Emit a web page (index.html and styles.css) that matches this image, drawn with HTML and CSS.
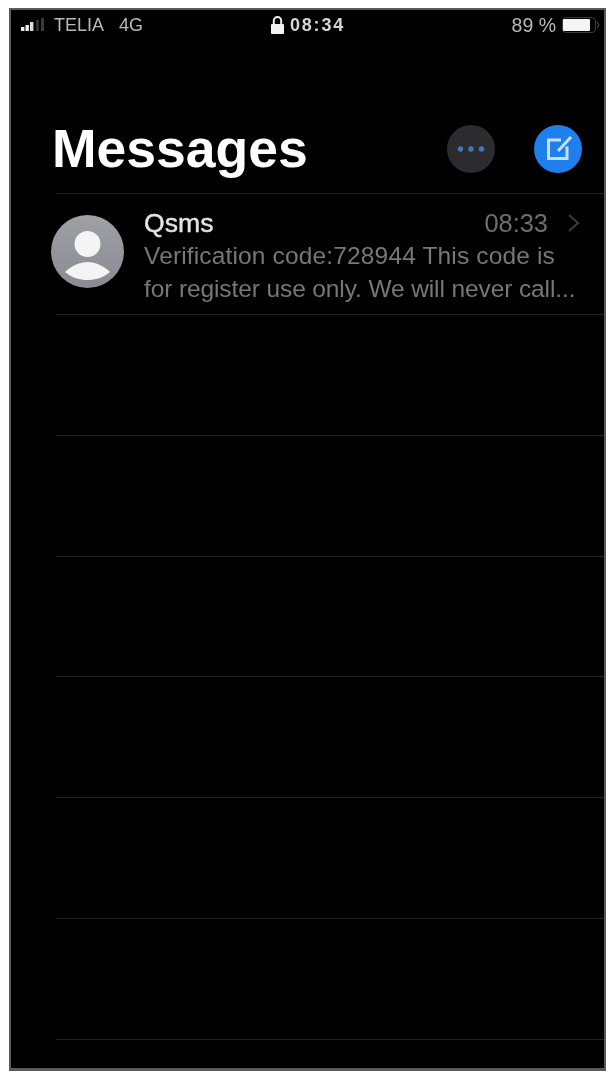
FILE: index.html
```html
<!DOCTYPE html>
<html lang="en">
<head>
<meta charset="utf-8">
<title>Messages</title>
<link rel="stylesheet" href="styles.css">
</head>
<body>
<main class="phone">
  <div class="content">
    <header class="status">
      <div class="status-left">
        <svg class="signal" width="26" height="14" viewBox="0 0 26 14"><rect x="0" y="9" width="3.4" height="4" fill="#eee"/><rect x="4.5" y="7" width="3.4" height="6" fill="#eee"/><rect x="9" y="4" width="3.4" height="9" fill="#ddd"/><rect x="15" y="2" width="3" height="11" fill="#2e2e2e"/><rect x="20" y="0" width="3" height="13" fill="#3a3a3a"/></svg>
        <span>TELIA</span><span class="net">4G</span>
      </div>
      <div class="status-mid">
        <svg width="15" height="20" viewBox="0 0 15 20"><path d="M3.8 9V5.8a3.7 3.7 0 0 1 7.4 0V9" fill="none" stroke="#eee" stroke-width="2"/><rect x="1" y="9" width="13" height="10" rx="1" fill="#f2f2f2"/></svg>
        <span>08:34</span>
      </div>
      <div class="status-right">
        <span>89 %</span>
        <svg width="38" height="18" viewBox="0 0 38 18"><rect x=".5" y="1.5" width="33" height="15" rx="3.5" fill="none" stroke="#3c3c3c"/><rect x="1" y="3" width="27" height="12" rx="1" fill="#f5f5f5"/><path d="M35 6l2 3-2 3" fill="none" stroke="#444" stroke-width="1.2"/></svg>
      </div>
    </header>
    <div class="title-row">
      <h1>Messages</h1>
      <button class="round more" type="button" aria-label="More"><svg width="32" height="8" viewBox="0 0 32 8"><circle cx="5.5" cy="4" r="2.7" fill="#3f78c0"/><circle cx="16" cy="4" r="2.7" fill="#3f78c0"/><circle cx="26.5" cy="4" r="2.7" fill="#3f78c0"/></svg></button>
      <button class="round compose" type="button" aria-label="Compose"><svg width="48" height="48" viewBox="0 0 48 48"><path d="M27 15H14.5v18.5H33V21.5" fill="none" stroke="#c4e0ff" stroke-width="3"/><path d="M24 26 37 12" fill="none" stroke="#c4e0ff" stroke-width="3"/></svg></button>
    </div>
    <ul class="list">
      <li class="row message">
        <div class="avatar"><svg width="73" height="73" viewBox="0 0 73 73"><defs><linearGradient id="g" x1="0" y1="0" x2="0" y2="1"><stop offset="0" stop-color="#a0a1a7"/><stop offset="1" stop-color="#8a8b92"/></linearGradient></defs><circle cx="36.5" cy="36.5" r="36.5" fill="url(#g)"/><circle cx="36.5" cy="29" r="13" fill="#f4f4f5"/><path d="M14 57C20 51 29 47 36.5 47S53 51 59 57C52 63 44 65 36.5 65S21 63 14 57Z" fill="#f4f4f5"/></svg></div>
        <div class="body">
          <div class="head"><span class="name">Qsms</span><span class="time">08:33</span><svg class="chev" width="13" height="20" viewBox="0 0 13 20"><path d="M2 2l9 8-9 8" fill="none" stroke="#3a3a3a" stroke-width="2"/></svg></div>
          <p class="preview"><span class="line-a">Verification code:728944 This code is</span><span class="line-b">for register use only. We will never call...</span></p>
        </div>
      </li>
      <li class="row"></li>
      <li class="row"></li>
      <li class="row"></li>
      <li class="row"></li>
      <li class="row"></li>
      <li class="row"></li>
      <li class="row"></li>
    </ul>
  </div>
</main>
</body>
</html>
```
FILE: styles.css
```css
* { box-sizing: border-box; }
html, body { margin: 0; padding: 0; background: #fff; }
body { width: 610px; height: 1071px; overflow: hidden; padding: 8px 4px 0 9px; font-family: "Liberation Sans", Arial, sans-serif; }
.phone { height: 1063px; background: #000; border: 2px solid #5a5a5a; border-bottom-width: 3px; overflow: hidden; }
.content { filter: blur(.7px); }
.status { display: flex; align-items: center; height: 30px; padding: 0 4px 0 10px; color: #b8b8b8; font-size: 18px; }
.status-left { display: flex; align-items: center; gap: 7px; width: 249px; flex: none; }
.net { margin-left: 8px; }
.status-mid { display: flex; align-items: center; gap: 5px; color: #d5d5d5; font-weight: 700; font-size: 18px; letter-spacing: 1.8px; }
.status-right { display: flex; align-items: center; gap: 6px; margin-left: auto; font-size: 19.5px; }
.title-row { display: flex; align-items: center; height: 153px; padding: 65px 22px 0 41px; }
h1 { margin: 0; flex: 1; color: #fff; font-size: 53.5px; line-height: 60px; font-weight: 700; }
.round { width: 48px; height: 48px; border: 0; padding: 0; border-radius: 50%; display: flex; align-items: center; justify-content: center; }
.more { background: #2c2c2e; margin-right: 39px; }
.compose { background: #1f80ed; }
.list { list-style: none; margin: 0; padding: 0 0 0 45px; }
.row { height: 120.85px; border-top: 1px solid #222; }
.row:last-child { height: 30px; }
.message { display: flex; align-items: center; }
.avatar { width: 73px; height: 73px; margin-left: -5px; flex: none; margin-top: -4px; }
.avatar svg { display: block; }
.body { flex: 1; margin-left: 20px; padding-right: 24px; align-self: flex-start; padding-top: 16px; }
.head { display: flex; align-items: center; height: 26px; }
.name { flex: 1; color: #e4e4e4; font-size: 26.6px; -webkit-text-stroke: .4px #e4e4e4; }
.time { color: #6e6e6e; font-size: 25.4px; margin-right: 19px; }
.preview { margin: 2.5px 0 0; color: #777; font-size: 24.5px; line-height: 33px; white-space: nowrap; }
.line-a, .line-b { display: block; }
.line-a { letter-spacing: .15px; }
.line-b { letter-spacing: -.11px; }
```
